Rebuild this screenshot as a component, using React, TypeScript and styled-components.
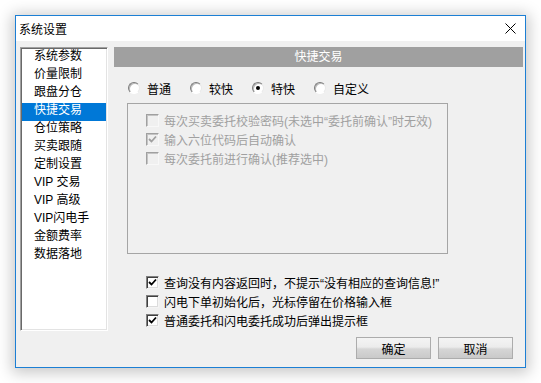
import React, { useState } from "react";
import styled, { createGlobalStyle } from "styled-components";

const GlobalStyle = createGlobalStyle`
  body {
    margin: 0;
    background: #ffffff;
    font-family: "Liberation Sans", "Noto Sans CJK SC", sans-serif;
    font-size: 12px;
    color: #000;
  }
`;

const Page = styled.div`
  padding: 15px;
`;

const Window = styled.div`
  width: 511px;
  height: 353px;
  box-sizing: border-box;
  border: 1px solid #1c7fd4;
  box-shadow: 0 2px 14px 3px rgba(0, 0, 0, 0.22);
  display: flex;
  flex-direction: column;
  background: #f0f0f0;
`;

const TitleBar = styled.div`
  height: 25px;
  flex: none;
  background: #ffffff;
  display: flex;
  align-items: center;
  justify-content: space-between;
  padding-left: 3px;
`;

const CloseIcon = styled.svg`
  width: 11px;
  height: 11px;
  margin-right: 9px;
`;

const Body = styled.div`
  flex: 1;
  display: grid;
  grid-template-columns: 88px 1fr;
  column-gap: 6px;
  padding: 6px 2px 0 4px;
`;

const ListBox = styled.div`
  height: 284px;
  box-sizing: border-box;
  background: #ffffff;
  border: 1px solid;
  border-color: #a0a0a0 #ffffff #ffffff #a0a0a0;
  box-shadow: inset 1px 1px 0 #696969, inset -1px -1px 0 #e3e3e3;
  padding: 1px 1px 0 1px;
  overflow: hidden;
`;

const ListItem = styled.div<{ $active?: boolean }>`
  height: 18px;
  line-height: 14px;
  padding-left: 12px;
  white-space: nowrap;
  background: ${(p) => (p.$active ? "#0078d7" : "transparent")};
  color: ${(p) => (p.$active ? "#ffffff" : "#000000")};
`;

const Panel = styled.div`
  display: flex;
  flex-direction: column;
`;

const Header = styled.div`
  height: 20px;
  line-height: 20px;
  background: #a0a0a0;
  color: #ffffff;
  text-align: center;
`;

const RadioRow = styled.div`
  display: flex;
  margin-top: 14px;
  padding-left: 14px;
  height: 14px;
  align-items: center;
`;

const RadioItem = styled.label`
  width: 62px;
  display: flex;
  align-items: center;
  gap: 7px;
`;

const RadioCircle = styled.span<{ $on?: boolean }>`
  width: 12px;
  height: 12px;
  box-sizing: border-box;
  border-radius: 50%;
  border: 1px solid;
  border-color: #7a7a7a #e8e8e8 #ffffff #7a7a7a;
  background: #ffffff;
  box-shadow: inset 1px 1px 0 #b9b9b9;
  display: flex;
  align-items: center;
  justify-content: center;
  &::after {
    content: "";
    width: 4px;
    height: 4px;
    border-radius: 50%;
    background: ${(p) => (p.$on ? "#000" : "transparent")};
  }
`;

const GroupBox = styled.div`
  margin: 8px 0 0 13px;
  width: 321px;
  height: 151px;
  box-sizing: border-box;
  border: 1px solid #a5a5a5;
  padding: 7px 0 0 18px;
`;

const CheckRow = styled.label<{ $disabled?: boolean }>`
  height: 19px;
  display: flex;
  align-items: center;
  gap: 5px;
  white-space: nowrap;
  color: ${(p) => (p.$disabled ? "#a0a0a0" : "#000")};
`;

const Box = styled.span<{ $disabled?: boolean }>`
  width: 13px;
  height: 13px;
  flex: none;
  box-sizing: border-box;
  border: 1px solid;
  border-color: ${(p) =>
    p.$disabled ? "#a0a0a0 #f8f8f8 #f8f8f8 #a0a0a0" : "#808080 #f4f4f4 #f4f4f4 #808080"};
  box-shadow: ${(p) =>
    p.$disabled ? "inset 1px 1px 0 #c4c4c4" : "inset 1px 1px 0 #404040, inset -1px -1px 0 #dcdcdc"};
  background: ${(p) => (p.$disabled ? "#f0f0f0" : "#ffffff")};
  display: flex;
  align-items: center;
  justify-content: center;
`;

const BottomChecks = styled.div`
  margin-top: 19px;
  padding-left: 32px;
`;

const ButtonRow = styled.div`
  display: flex;
  justify-content: flex-end;
  gap: 7px;
  margin: 7px 10px 0 0;
`;

const Button = styled.button`
  width: 75px;
  height: 22px;
  box-sizing: border-box;
  border: 1px solid #acacac;
  background: linear-gradient(#f4f4f4 0%, #ececec 45%, #d6d6d6 55%, #c9c9c9 100%);
  font-family: "Liberation Sans", "Noto Sans CJK SC", sans-serif;
  font-size: 12px;
  color: #000;
  padding: 0;
`;

const items = [
  "系统参数",
  "价量限制",
  "跟盘分仓",
  "快捷交易",
  "仓位策略",
  "买卖跟随",
  "定制设置",
  "VIP 交易",
  "VIP 高级",
  "VIP闪电手",
  "金额费率",
  "数据落地",
];

const speeds = ["普通", "较快", "特快", "自定义"];

function Check({ on, disabled, children }: { on?: boolean; disabled?: boolean; children: React.ReactNode }) {
  return (
    <CheckRow $disabled={disabled}>
      <Box $disabled={disabled}>
        {on && (
          <svg width="9" height="9" viewBox="0 0 9 9">
            <path d="M1 4 L3.5 6.5 L8 1.5" stroke={disabled ? "#a0a0a0" : "#000"} strokeWidth="1.8" fill="none" />
          </svg>
        )}
      </Box>
      {children}
    </CheckRow>
  );
}

export default function App() {
  const [speed] = useState(2);
  return (
    <>
      <GlobalStyle />
      <Page>
        <Window>
          <TitleBar>
            <span>系统设置</span>
            <CloseIcon viewBox="0 0 11 11">
              <path d="M0.5 0.5 L10.5 10.5 M10.5 0.5 L0.5 10.5" stroke="#000" strokeWidth="1" />
            </CloseIcon>
          </TitleBar>
          <Body>
            <ListBox>
              {items.map((it, i) => (
                <ListItem key={it} $active={i === 3}>
                  {it}
                </ListItem>
              ))}
            </ListBox>
            <Panel>
              <Header>快捷交易</Header>
              <RadioRow>
                {speeds.map((s, i) => (
                  <RadioItem key={s}>
                    <RadioCircle $on={i === speed} />
                    {s}
                  </RadioItem>
                ))}
              </RadioRow>
              <GroupBox>
                <Check disabled>每次买卖委托校验密码(未选中“委托前确认”时无效)</Check>
                <Check disabled on>
                  输入六位代码后自动确认
                </Check>
                <Check disabled>每次委托前进行确认(推荐选中)</Check>
              </GroupBox>
              <BottomChecks>
                <Check on>查询没有内容返回时，不提示“没有相应的查询信息!”</Check>
                <Check>闪电下单初始化后，光标停留在价格输入框</Check>
                <Check on>普通委托和闪电委托成功后弹出提示框</Check>
              </BottomChecks>
              <ButtonRow>
                <Button>确定</Button>
                <Button>取消</Button>
              </ButtonRow>
            </Panel>
          </Body>
        </Window>
      </Page>
    </>
  );
}
